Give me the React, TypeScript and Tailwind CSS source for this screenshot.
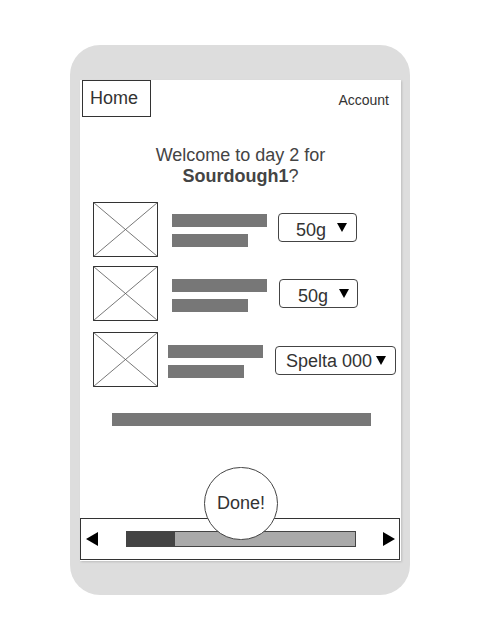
import type { ReactNode } from 'react'

function Placeholder() {
  return (
    <svg width="65" height="55" viewBox="0 0 65 55" className="block shrink-0">
      <rect x="0.5" y="0.5" width="64" height="54" fill="white" stroke="#333" strokeWidth="1" />
      <line x1="0.5" y1="0.5" x2="64.5" y2="54.5" stroke="#555" strokeWidth="0.8" />
      <line x1="64.5" y1="0.5" x2="0.5" y2="54.5" stroke="#555" strokeWidth="0.8" />
    </svg>
  )
}

function Caret() {
  return (
    <svg width="10" height="9" viewBox="0 0 10 9" className="shrink-0">
      <path d="M0 0 H10 L5 9 Z" fill="#000" />
    </svg>
  )
}

function Bars() {
  return (
    <div className="flex flex-col gap-[7px]">
      <div className="h-[13px] w-[95px] bg-[#777]" />
      <div className="h-[13px] w-[76px] bg-[#777]" />
    </div>
  )
}

function Select({ children, className }: { children: ReactNode; className: string }) {
  return (
    <div
      className={`flex h-[29px] items-center overflow-hidden rounded-[4px] border border-[#444] text-[18px] text-[#333] ${className}`}
    >
      {children}
    </div>
  )
}

export default function App() {
  return (
    <div className="h-[640px] w-[480px] bg-white pl-[70px] pt-[45px] font-['Liberation_Sans',Arial,sans-serif]">
      <div className="h-[550px] w-[340px] rounded-[30px] bg-[#dddddd] pl-[10px] pt-[35px]">
        <div className="relative flex h-[481px] w-[321px] flex-col bg-white shadow-[1px_1px_2px_rgba(0,0,0,0.15)]">
          <header className="flex items-start justify-between">
            <div className="ml-[2px] flex h-[37px] w-[69px] items-center border border-[#333] pl-[7px] text-[18px] text-[#333]">
              Home
            </div>
            <span className="mr-[12px] mt-[10px] text-[14px] text-[#333]">Account</span>
          </header>

          <h1 className="mt-[28px] text-center text-[18px] leading-[21px] text-[#444]">
            Welcome to day 2 for
            <br />
            <b className="font-bold">Sourdough1</b>?
          </h1>

          <div className="ml-[13px] mt-[15px] flex items-start">
            <Placeholder />
            <div className="ml-[14px] mt-[12px]">
              <Bars />
            </div>
            <Select className="ml-[11px] mt-[11px] w-[79px] pl-[17px]">
              <span className="mt-[4px] leading-none">50g</span>
              <span className="ml-[11px]">
                <Caret />
              </span>
            </Select>
          </div>

          <div className="ml-[13px] mt-[9px] flex items-start">
            <Placeholder />
            <div className="ml-[14px] mt-[13px]">
              <Bars />
            </div>
            <Select className="ml-[12px] mt-[13px] w-[79px] pl-[18px]">
              <span className="mt-[4px] leading-none">50g</span>
              <span className="ml-[11px]">
                <Caret />
              </span>
            </Select>
          </div>

          <div className="ml-[13px] mt-[11px] flex items-start">
            <Placeholder />
            <div className="ml-[10px] mt-[13px]">
              <Bars />
            </div>
            <Select className="ml-[12px] mt-[14px] w-[121px] pl-[10px]">
              <span className="mt-[1px] leading-none">Spelta 000</span>
              <span className="ml-[4px]">
                <Caret />
              </span>
            </Select>
          </div>

          <div className="ml-[32px] mt-[26px] h-[13px] w-[259px] bg-[#777]" />

          <div className="mb-[1px] mt-auto flex h-[42px] w-[320px] items-center border border-[#333]">
            <svg width="12" height="14" viewBox="0 0 12 14" className="ml-[5px]">
              <path d="M12 0 V14 L0 7 Z" fill="#000" />
            </svg>
            <div className="ml-[28px] flex h-[16px] w-[230px] border border-[#444] bg-[#aaa]">
              <div className="h-full w-[48px] bg-[#444]" />
            </div>
            <svg width="12" height="14" viewBox="0 0 12 14" className="ml-[27px]">
              <path d="M0 0 V14 L12 7 Z" fill="#000" />
            </svg>
          </div>

          <div className="absolute left-[124px] top-[387px] flex h-[73px] w-[74px] items-center justify-center rounded-full border border-[#444] bg-white text-[18px] text-[#333]">
            Done!
          </div>
        </div>
      </div>
    </div>
  )
}
